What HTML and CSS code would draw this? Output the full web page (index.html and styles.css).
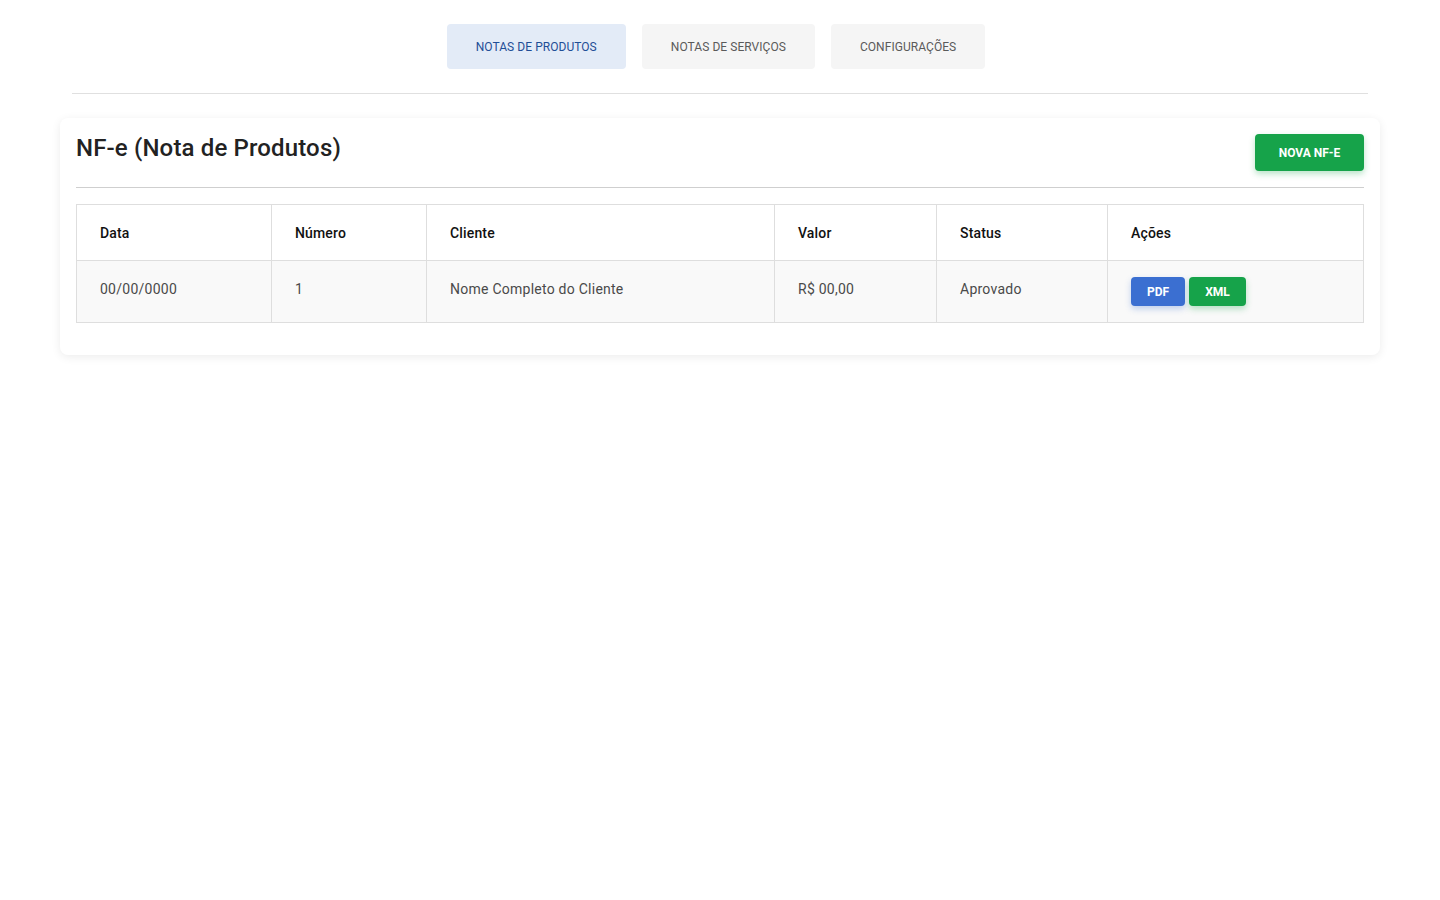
FILE: index.html
```html
<!DOCTYPE html>
<html lang="pt-BR">
<head>
<meta charset="utf-8">
<title>NF-e</title>
<link rel="stylesheet" href="styles.css">
</head>
<body>
<div class="page">
  <nav class="tabs">
    <button class="tab active">NOTAS DE PRODUTOS</button>
    <button class="tab">NOTAS DE SERVIÇOS</button>
    <button class="tab">CONFIGURAÇÕES</button>
  </nav>
  <hr class="divider">
  <section class="card">
    <header class="card-header">
      <h1 class="title">NF-e (Nota de Produtos)</h1>
      <button class="btn btn-green btn-lg">NOVA NF-E</button>
    </header>
    <hr class="card-divider">
    <table class="grid">
      <colgroup>
        <col class="c1"><col class="c2"><col class="c3"><col class="c4"><col class="c5"><col class="c6">
      </colgroup>
      <thead>
        <tr><th>Data</th><th>Número</th><th>Cliente</th><th>Valor</th><th>Status</th><th>Ações</th></tr>
      </thead>
      <tbody>
        <tr>
          <td>00/00/0000</td>
          <td>1</td>
          <td>Nome Completo do Cliente</td>
          <td>R$ 00,00</td>
          <td>Aprovado</td>
          <td><div class="actions"><button class="btn btn-blue btn-sm">PDF</button><button class="btn btn-green btn-sm">XML</button></div></td>
        </tr>
      </tbody>
    </table>
  </section>
</div>
</body>
</html>
```
FILE: styles.css
```css
* { box-sizing: border-box; }
body {
  margin: 0;
  background: #fff;
  font-family: Roboto, "Noto Sans", sans-serif;
  color: #222;
}
.page {
  padding: 24px 60px;
}
.tabs {
  display: flex;
  justify-content: center;
  gap: 16px;
  padding-right: 8px;
}
.tab {
  font-family: inherit;
  font-size: 12px;
  height: 45px;
  padding: 0 29px;
  border: none;
  border-radius: 4px;
  background: #f5f5f5;
  color: #5a5a5a;
  letter-spacing: 0.05px;
  cursor: pointer;
}
.tab.active {
  background: #e3ebf7;
  color: #1f4e96;
}
.divider {
  margin: 24px 12px 24px;
  border: none;
  border-top: 1px solid #e0e0e0;
}
.card {
  background: #fff;
  border-radius: 8px;
  padding: 16px 16px 32px;
  box-shadow: 0 2px 10px rgba(0,0,0,0.08);
}
.card-header {
  display: flex;
  justify-content: space-between;
  align-items: flex-start;
}
.title {
  margin: 0;
  font-size: 24px;
  line-height: 28px;
  font-weight: 500;
  letter-spacing: 0.15px;
  color: #222;
}
.btn {
  font-family: inherit;
  font-weight: 700;
  font-size: 12px;
  border: none;
  border-radius: 4px;
  color: #fff;
  cursor: pointer;
}
.btn-green { background: #16a34a; box-shadow: 0 3px 6px rgba(22,163,74,0.3); }
.btn-blue { background: #3b6fd1; box-shadow: 0 3px 6px rgba(59,111,209,0.3); }
.btn-lg { width: 109px; height: 37px; }
.btn-sm { height: 29px; padding: 0 16px; }
.card-divider {
  margin: 16px 0 16px;
  border: none;
  border-top: 1px solid #cfcfcf;
}
.grid {
  width: 1288px;
  table-layout: fixed;
  border-collapse: collapse;
  font-size: 14px;
}
.c1 { width: 195px; }
.c2 { width: 155px; }
.c3 { width: 348px; }
.c4 { width: 162px; }
.c5 { width: 171px; }
.c6 { width: 256px; }
.grid th, .grid td {
  border: 1px solid #dedede;
  padding: 16px 22px 16px 23px;
  line-height: 24px;
  text-align: left;
  vertical-align: top;
}
.grid th {
  padding-bottom: 15px;
  font-weight: 500;
  letter-spacing: 0.15px;
  color: #111;
  background: #fff;
}
.grid td {
  color: #4a4a4a;
  letter-spacing: 0.25px;
  background: #f9f9f9;
}
.actions {
  display: flex;
  gap: 4px;
}
```
